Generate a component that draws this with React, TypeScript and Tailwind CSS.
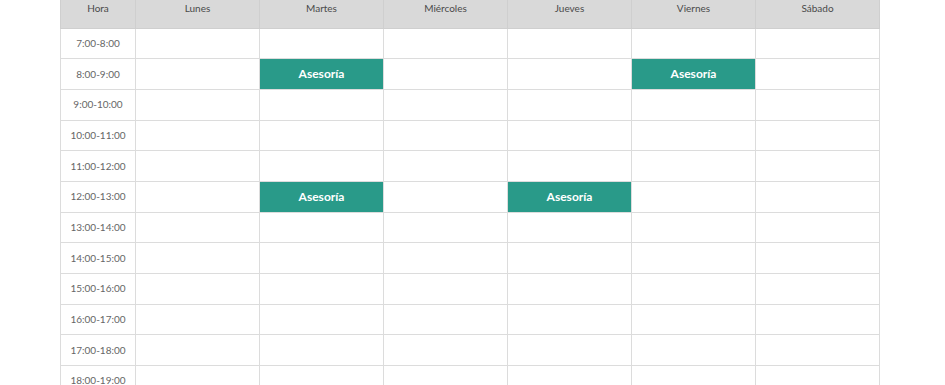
const DAYS = ['Lunes', 'Martes', 'Miércoles', 'Jueves', 'Viernes', 'Sábado']

const HOURS = [
  '7:00-8:00', '8:00-9:00', '9:00-10:00', '10:00-11:00', '11:00-12:00', '12:00-13:00',
  '13:00-14:00', '14:00-15:00', '15:00-16:00', '16:00-17:00', '17:00-18:00', '18:00-19:00',
]

// [hour row, day column] pairs that hold a booked slot
const BOOKED = new Set(['1-1', '1-4', '5-1', '5-3'])

export default function App() {
  return (
    <div className="w-[945px] h-[385px] overflow-hidden bg-white" style={{ fontFamily: "Lato, 'Open Sans', sans-serif" }}>
      <div className="pl-[60px]">
        <table className="border-collapse table-fixed w-[819px] text-[10px] text-[#666666]">
          <colgroup>
            <col className="w-[75px]" />
            {DAYS.map(d => <col key={d} className="w-[124px]" />)}
          </colgroup>
          <thead>
            <tr className="h-[28px] bg-[#d9d9d9]">
              <th className="border border-t-0 border-[#cfcfcf] font-normal align-top pt-[1px] text-[#4a4a4a]">Hora</th>
              {DAYS.map(d => (
                <th key={d} className="border border-t-0 border-[#cfcfcf] font-normal align-top pt-[1px] text-[#4a4a4a]">{d}</th>
              ))}
            </tr>
          </thead>
          <tbody>
            {HOURS.map((h, r) => (
              <tr key={h} className="h-[30.7px]">
                <td className="border border-[#dcdcdc] text-center">{h}</td>
                {DAYS.map((d, c) => (
                  BOOKED.has(`${r}-${c}`) ? (
                    <td key={d} className="border border-[#dcdcdc] bg-[#299a89] text-center text-white font-bold text-[12px]">
                      Asesoría
                    </td>
                  ) : (
                    <td key={d} className="border border-[#dcdcdc]" />
                  )
                ))}
              </tr>
            ))}
          </tbody>
        </table>
      </div>
    </div>
  )
}
